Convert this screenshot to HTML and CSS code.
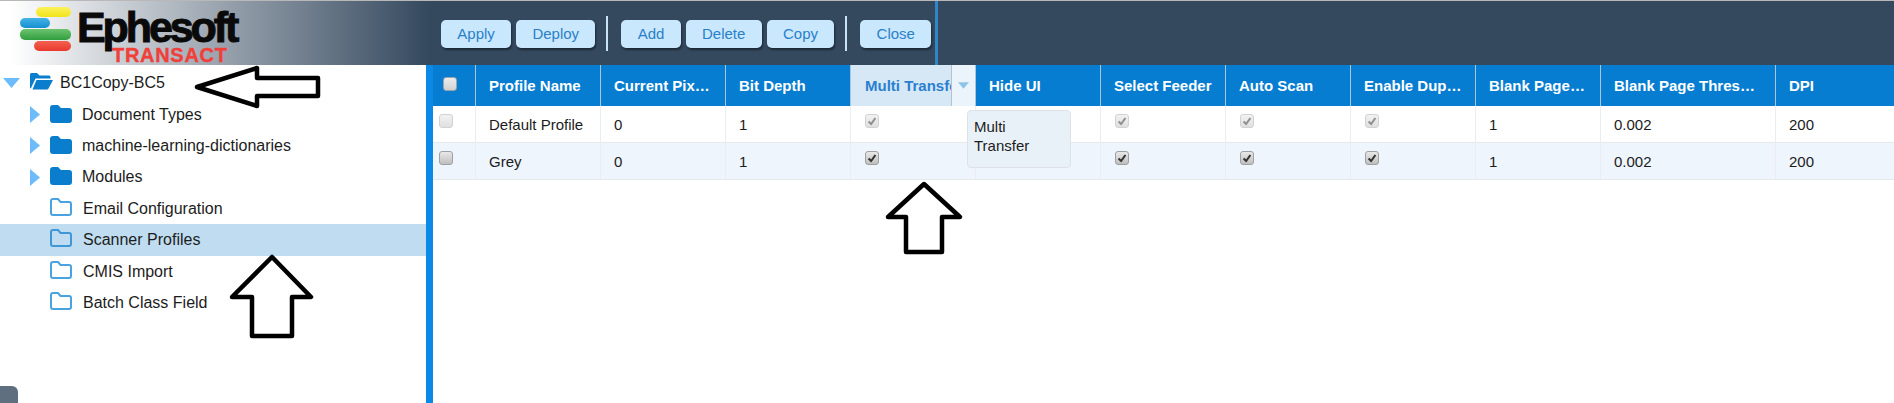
FILE: index.html
```html
<!DOCTYPE html>
<html lang="en">
<head>
<meta charset="utf-8">
<title>Ephesoft Transact</title>
<link rel="stylesheet" href="styles.css">
</head>
<body>
<div class="page">
  <header class="topbar">
    <div class="logo">
      <div class="logo-bars">
        <span class="bar bar-yellow"></span>
        <span class="bar bar-blue"></span>
        <span class="bar bar-green"></span>
        <span class="bar bar-red"></span>
      </div>
      <div class="logo-text">
        <span class="logo-name">Ephesoft</span>
        <span class="logo-sub">TRANSACT</span>
      </div>
    </div>
    <div class="tools">
      <button class="btn">Apply</button>
      <button class="btn">Deploy</button>
      <span class="sep"></span>
      <button class="btn">Add</button>
      <button class="btn">Delete</button>
      <button class="btn">Copy</button>
      <span class="sep"></span>
      <button class="btn">Close</button>
      <span class="tool-end"></span>
    </div>
  </header>
  <main class="main">
    <nav class="tree">
      <div class="node root">
        <svg class="tw tw-down" viewBox="0 0 17 10"><path d="M0 0H17L8.5 10Z"/></svg>
        <svg class="fold-open" viewBox="0 0 24 18"><path d="M1 16V2.5Q1 1 2.5 1H8L10.5 3.5H20Q21.500 3.500 21.500 5V6.500H6.500L1.800 16.500Z"/><path d="M7.500 8H24L19.500 16.500Q19 17.500 18 17.500H3.500Z"/></svg>
        <span>BC1Copy-BC5</span>
      </div>
      <div class="node branch">
        <svg class="tw tw-right" viewBox="0 0 10 17"><path d="M0 0L10 8.500L0 17Z"/></svg>
        <svg class="fold" viewBox="0 0 22 18"><path d="M0 3Q0 0 3 0H8L11 3H19Q22 3 22 6V15Q22 18 19 18H3Q0 18 0 15Z"/></svg>
        <span>Document Types</span>
      </div>
      <div class="node branch">
        <svg class="tw tw-right" viewBox="0 0 10 17"><path d="M0 0L10 8.500L0 17Z"/></svg>
        <svg class="fold" viewBox="0 0 22 18"><path d="M0 3Q0 0 3 0H8L11 3H19Q22 3 22 6V15Q22 18 19 18H3Q0 18 0 15Z"/></svg>
        <span>machine-learning-dictionaries</span>
      </div>
      <div class="node branch">
        <svg class="tw tw-right" viewBox="0 0 10 17"><path d="M0 0L10 8.500L0 17Z"/></svg>
        <svg class="fold" viewBox="0 0 22 18"><path d="M0 3Q0 0 3 0H8L11 3H19Q22 3 22 6V15Q22 18 19 18H3Q0 18 0 15Z"/></svg>
        <span>Modules</span>
      </div>
      <div class="node leaf">
        <svg class="fold-line" viewBox="0 0 22 18"><path d="M1 3Q1 1 3 1H8L10.500 4H19Q21 4 21 6V15Q21 17 19 17H3Q1 17 1 15Z"/></svg>
        <span>Email Configuration</span>
      </div>
      <div class="node leaf selected">
        <svg class="fold-line" viewBox="0 0 22 18"><path d="M1 3Q1 1 3 1H8L10.500 4H19Q21 4 21 6V15Q21 17 19 17H3Q1 17 1 15Z"/></svg>
        <span>Scanner Profiles</span>
      </div>
      <div class="node leaf">
        <svg class="fold-line" viewBox="0 0 22 18"><path d="M1 3Q1 1 3 1H8L10.500 4H19Q21 4 21 6V15Q21 17 19 17H3Q1 17 1 15Z"/></svg>
        <span>CMIS Import</span>
      </div>
      <div class="node leaf">
        <svg class="fold-line" viewBox="0 0 22 18"><path d="M1 3Q1 1 3 1H8L10.500 4H19Q21 4 21 6V15Q21 17 19 17H3Q1 17 1 15Z"/></svg>
        <span>Batch Class Field</span>
      </div>
      <div class="corner"></div>
    </nav>
    <div class="divider"></div>
    <section class="grid-wrap">
      <table class="grid">
        <colgroup>
          <col class="c-check"><col class="c-std"><col class="c-std"><col class="c-std"><col class="c-std"><col class="c-std"><col class="c-std"><col class="c-std"><col class="c-std"><col class="c-std"><col class="c-wide"><col>
        </colgroup>
        <thead>
          <tr>
            <th class="check-cell"><span class="cb cb-head"></span></th>
            <th>Profile Name</th>
            <th>Current Pixel Type</th>
            <th>Bit Depth</th>
            <th class="active"><div class="active-in"><span class="active-label">Multi Transfer</span><span class="menu-btn"><svg viewBox="0 0 12 7"><path d="M0 0H12L6 7Z"/></svg></span></div></th>
            <th>Hide UI</th>
            <th>Select Feeder</th>
            <th>Auto Scan</th>
            <th>Enable Duplex</th>
            <th>Blank Page Detection</th>
            <th>Blank Page Threshold Value</th>
            <th>DPI</th>
          </tr>
        </thead>
        <tbody>
          <tr>
            <td class="check-cell"><span class="cb cb-off"></span></td>
            <td>Default Profile</td>
            <td>0</td>
            <td>1</td>
            <td class="box"><span class="cb cb-off"><svg viewBox="0 0 14 14"><path d="M3 7.500L6 10.500L11 3.500"/></svg></span></td>
            <td class="box"></td>
            <td class="box"><span class="cb cb-off"><svg viewBox="0 0 14 14"><path d="M3 7.500L6 10.500L11 3.500"/></svg></span></td>
            <td class="box"><span class="cb cb-off"><svg viewBox="0 0 14 14"><path d="M3 7.500L6 10.500L11 3.500"/></svg></span></td>
            <td class="box"><span class="cb cb-off"><svg viewBox="0 0 14 14"><path d="M3 7.500L6 10.500L11 3.500"/></svg></span></td>
            <td>1</td>
            <td>0.002</td>
            <td>200</td>
          </tr>
          <tr>
            <td class="check-cell"><span class="cb"></span></td>
            <td>Grey</td>
            <td>0</td>
            <td>1</td>
            <td class="box"><span class="cb"><svg viewBox="0 0 14 14"><path d="M3 7.500L6 10.500L11 3.500"/></svg></span></td>
            <td class="box"></td>
            <td class="box"><span class="cb"><svg viewBox="0 0 14 14"><path d="M3 7.500L6 10.500L11 3.500"/></svg></span></td>
            <td class="box"><span class="cb"><svg viewBox="0 0 14 14"><path d="M3 7.500L6 10.500L11 3.500"/></svg></span></td>
            <td class="box"><span class="cb"><svg viewBox="0 0 14 14"><path d="M3 7.500L6 10.500L11 3.500"/></svg></span></td>
            <td>1</td>
            <td>0.002</td>
            <td>200</td>
          </tr>
        </tbody>
      </table>
    </section>
  </main>
  <div class="tooltip">Multi<br>Transfer</div>
  <svg class="annot" viewBox="0 0 1894 403">
    <path d="M197 87L257 68V78H318V96H257V106Z"/>
    <path d="M924 184L960 217H942V252H906V217H888Z"/>
    <path d="M272 257L311 297H292V336H252V297H232Z"/>
  </svg>
</div>
</body>
</html>
```
FILE: styles.css
```css
* { box-sizing: border-box; }
html, body { margin: 0; padding: 0; }
body { font-family: "Liberation Sans", Arial, sans-serif; font-size: 15px; color: #1c1c1c; background: #fff; }
.page { position: relative; width: 1894px; height: 403px; overflow: hidden; }

.topbar {
  display: flex;
  height: 65px;
  border-top: 1px solid #b8b8b8;
  background: linear-gradient(90deg, #fff 0, #fff 10px, #34485e 430px);
}
.logo { position: relative; width: 441px; flex: none; }
.logo-bars { position: absolute; left: 0; top: 0; }
.bar { position: absolute; display: block; border-radius: 5px; }
.bar-yellow { left: 36px; top: 6px; width: 35px; height: 10px; background: linear-gradient(#fbf25a, #f2e31c); }
.bar-blue { left: 20px; top: 17px; width: 30px; height: 10px; background: linear-gradient(#45b3e6, #148fd0); }
.bar-green { left: 20px; top: 28px; width: 51px; height: 11px; background: linear-gradient(#6cc36f, #2f9e3e); }
.bar-red { left: 34px; top: 40px; width: 37px; height: 10px; background: linear-gradient(#f4604f, #e83a2e); }
.logo-text { position: absolute; left: 77px; top: 7px; }
.logo-name { display: block; font-size: 43px; line-height: 38px; font-weight: 700; letter-spacing: -3.1px; color: #0a0a0a; -webkit-text-stroke: 1px #0a0a0a; }
.logo-sub { position: absolute; left: 35px; top: 39px; font-size: 20px; line-height: 17px; font-weight: 700; letter-spacing: 0.7px; color: #f0403a; -webkit-text-stroke: 0.4px #f0403a; }

.tools { display: flex; align-items: flex-start; }
.btn {
  height: 28px;
  margin: 19px 5px 0 0;
  padding: 0 16.3px;
  border: 0;
  border-radius: 5px;
  background: #c9e8fd;
  color: #2a80c8;
  font: 15px/28px "Liberation Sans", Arial, sans-serif;
  box-shadow: 1px 2px 2px #1d2a38;
}
.sep { width: 2px; height: 35px; margin: 15px 13px 0 6px; background: #c9e3f5; }
.tool-end { width: 3px; height: 64px; margin-left: -1px; background: #2f86c9; }

.main { display: flex; height: 338px; }
.tree { position: relative; width: 426px; flex: none; padding-top: 2.5px; font-size: 16px; }
.node { display: flex; align-items: center; height: 31.4px; }
.root { padding-left: 3px; }
.branch { padding-left: 30px; }
.leaf { padding-left: 50px; }
.selected { background: #c0dcf1; }
.tw { fill: #6cbcfb; flex: none; }
.tw-down { width: 17px; height: 10px; }
.tw-right { width: 10px; height: 17px; }
.fold-open { width: 24px; height: 18px; margin: -4px 7px 0 9px; fill: #0a7dcc; flex: none; }
.fold { width: 22px; height: 18px; margin: -2px 10px 0 10px; fill: #0a7dcc; flex: none; }
.fold-line { width: 22px; height: 18px; margin: -4px 11px 0 0; fill: none; stroke: #4aa3e0; stroke-width: 2; flex: none; }
.selected .fold-line { stroke: #3f97d8; }
.corner { position: absolute; left: 0; bottom: 0; width: 18px; height: 17px; background: #5f6f80; border-top-right-radius: 6px; }

.divider { width: 7px; flex: none; background: #0a8ae6; }
.grid-wrap { flex: 1; min-width: 0; }
.grid { width: 100%; table-layout: fixed; border-collapse: separate; border-spacing: 0; }
.c-check { width: 43px; }
.c-std { width: 125px; }
.c-wide { width: 175px; }
.grid th {
  height: 41px;
  padding: 0 13px;
  background: #067dd0;
  color: #fff;
  font-weight: 700;
  text-align: left;
  white-space: nowrap;
  overflow: hidden;
  text-overflow: ellipsis;
  border-right: 1px solid #a9c6dc;
}
.grid th:last-child { border-right: 0; }
.grid td {
  height: 37px;
  padding: 0 13px;
  border-right: 1px solid #ebeef0;
  border-bottom: 1px solid #e6e9ec;
  white-space: nowrap;
  overflow: hidden;
}
.grid td:last-child { border-right: 0; }
.grid tbody tr:nth-child(even) td { background: #eef5fc; }
.grid th.active { padding: 0; background: #d6e8f6; color: #2a7fcf; }
.active-in { display: flex; height: 41px; }
.active-label { display: block; width: 101px; flex: none; padding-left: 14px; overflow: hidden; white-space: nowrap; line-height: 41px; border-right: 1px solid #b4c2cd; }
.menu-btn { display: flex; flex: 1; align-items: center; justify-content: center; background: #ecf4fb; }
.menu-btn svg { width: 11px; height: 7px; fill: #8fc4ea; }

.grid .check-cell { padding: 0 0 0 6px; vertical-align: top; }
.grid th.check-cell { padding: 12px 0 0 10px; }
.grid td.check-cell { padding-top: 8px; }
.grid td.box { padding: 8px 0 0 14px; vertical-align: top; }
.cb {
  display: block;
  width: 14px;
  height: 14px;
  border: 1px solid #a0a0a0;
  border-radius: 3px;
  background: linear-gradient(#e8e8e8, #bfbfbf);
}
.cb svg { display: block; width: 12px; height: 12px; fill: none; stroke: #333; stroke-width: 2.4; }
.cb-off { border-color: #d2d2d2; background: linear-gradient(#f2f2f2, #e0e0e0); }
.cb-off svg { stroke: #909090; }
.cb-head { border-color: #9aa4ab; background: linear-gradient(#ececec, #d2d2d2); }

.tooltip {
  position: absolute;
  left: 967px;
  top: 110px;
  width: 104px;
  height: 58px;
  padding: 6px;
  background: #e9f1f8;
  border: 1px solid #dce2e8;
  border-radius: 4px;
  line-height: 19px;
  color: #1c1c1c;
}
.annot { position: absolute; left: 0; top: 0; width: 1894px; height: 403px; pointer-events: none; fill: #fff; stroke: #000; stroke-width: 4.5; stroke-linejoin: round; }
```
